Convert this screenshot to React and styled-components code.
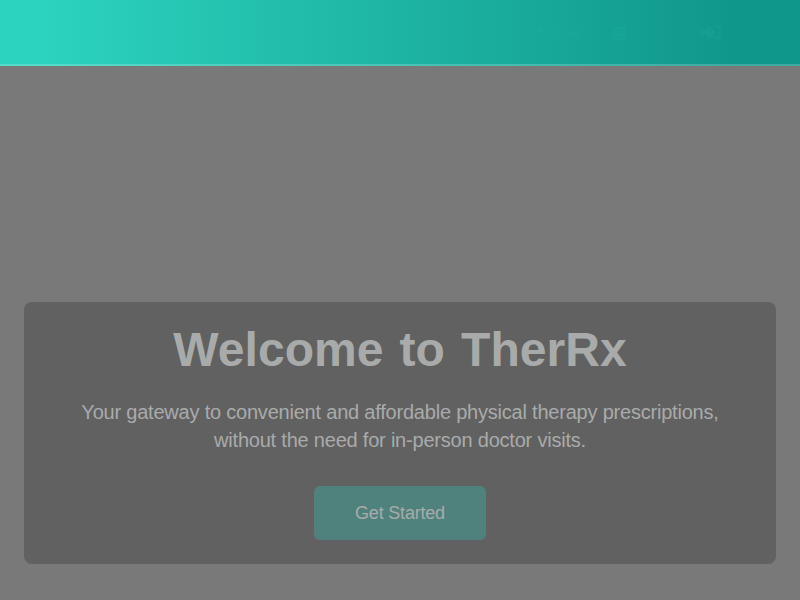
import React from "react";
import styled, { createGlobalStyle } from "styled-components";
import { FaSignInAlt, FaCalendarAlt } from "react-icons/fa";

const GlobalStyle = createGlobalStyle`
  * { box-sizing: border-box; }
  body { margin: 0; background: #797979; font-family: Helvetica, "Liberation Sans", Arial, sans-serif; }
`;
const Page = styled.div`
  height: 600px;
  display: flex;
  flex-direction: column;
  overflow: hidden;
`;
const Header = styled.header`
  height: 66px;
  flex: none;
  display: flex;
  align-items: center;
  justify-content: flex-end;
  padding: 0 79px 0 0;
  border-bottom: 2px solid rgba(255, 255, 255, 0.2);
  background: linear-gradient(to right, #2cd3be 5%, #10978b 92%) border-box;
`;
const NavLink = styled.a`
  display: flex;
  align-items: center;
  margin-left: ${(p) => p.$gap || 0}px;
  font-size: 16px;
  color: rgba(45, 212, 191, 0.09);
`;
const Hero = styled.main`
  flex: 1;
  display: flex;
  flex-direction: column;
  justify-content: flex-end;
  padding: 0 24px 36px;
`;
const Panel = styled.section`
  height: 262px;
  padding: 24px;
  border-radius: 8px;
  background: #616161;
  display: flex;
  flex-direction: column;
  align-items: center;
  text-align: center;
`;
const Title = styled.h1`
  margin: 0 0 24px;
  font-size: 48px;
  line-height: 48px;
  letter-spacing: 0.05px;
  word-spacing: 2.7px;
  color: #a9abaa;
`;
const Lead = styled.p`
  margin: 0 0 32px;
  max-width: 672px;
  font-size: 20px;
  line-height: 28px;
  letter-spacing: -0.21px;
  color: #a9abaa;
`;
const Button = styled.button`
  width: 172px;
  height: 54px;
  border: 0;
  border-radius: 6px;
  padding: 0;
  font: 18px/28px Helvetica, "Liberation Sans", Arial, sans-serif;
  letter-spacing: -0.2px;
  color: #a9abaa;
  background: #50827d;
`;

export default function App() {
  return (
    <>
      <GlobalStyle />
      <Page>
        <Header>
          <NavLink>Home</NavLink>
          <NavLink $gap={32}><FaCalendarAlt size={15} /></NavLink>
          <NavLink $gap={74}><FaSignInAlt size={20} /></NavLink>
        </Header>
        <Hero>
          <Panel>
            <Title>Welcome to TherRx</Title>
            <Lead>Your gateway to convenient and affordable physical therapy prescriptions, without the need for in-person doctor visits.</Lead>
            <Button>Get Started</Button>
          </Panel>
        </Hero>
      </Page>
    </>
  );
}
